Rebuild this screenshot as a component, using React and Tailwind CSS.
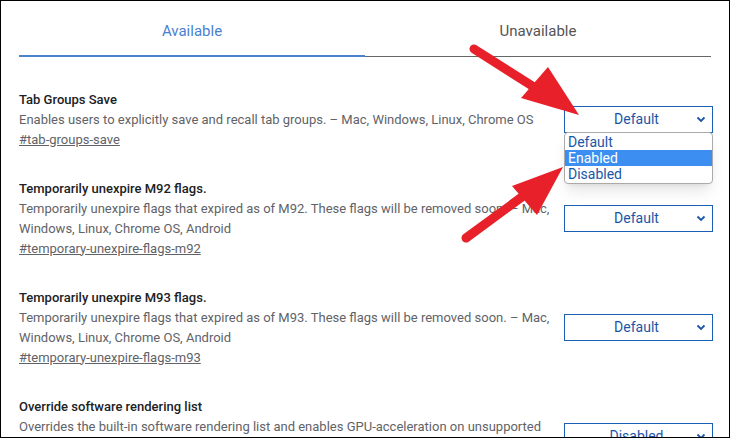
import React from "react";

const Chevron = () => (
  <svg width="10" height="7" viewBox="0 0 10 7" className="text-[#1a56a8]">
    <path d="M1.5 1.5 L5 5 L8.5 1.5" fill="none" stroke="currentColor" strokeWidth="1.8" />
  </svg>
);

const Select = ({ value, className = "" }) => (
  <div className={"w-[149px] h-[27px] border border-[#1a5fb4] bg-white flex items-center text-[14px] text-[#1a56a8] " + className}>
    <span className="flex-1 text-center pl-3">{value}</span>
    <span className="pr-[6px]"><Chevron /></span>
  </div>
);

const flags = [
  {
    title: "Tab Groups Save",
    desc: "Enables users to explicitly save and recall tab groups. – Mac, Windows, Linux, Chrome OS",
    link: "#tab-groups-save",
    value: "Default",
    open: true,
  },
  {
    title: "Temporarily unexpire M92 flags.",
    desc: "Temporarily unexpire flags that expired as of M92. These flags will be removed soon. – Mac, Windows, Linux, Chrome OS, Android",
    link: "#temporary-unexpire-flags-m92",
    value: "Default",
  },
  {
    title: "Temporarily unexpire M93 flags.",
    desc: "Temporarily unexpire flags that expired as of M93. These flags will be removed soon. – Mac, Windows, Linux, Chrome OS, Android",
    link: "#temporary-unexpire-flags-m93",
    value: "Default",
  },
  {
    title: "Override software rendering list",
    desc: "Overrides the built-in software rendering list and enables GPU-acceleration on unsupported system configurations.",
    link: "#ignore-gpu-blocklist",
    value: "Disabled",
  },
];

export default function App() {
  return (
    <div className="relative w-[730px] h-[438px] overflow-hidden bg-white border border-black" style={{ fontFamily: "Roboto, 'Liberation Sans', sans-serif" }}>
      <div className="flex mx-[18px] mt-[19px] text-[15px]">
        <div className="flex-1 text-center text-[#4a7fd0] pb-[12px] border-b-2 border-[#4a82cc]">Available</div>
        <div className="flex-1 text-center text-[#555] pb-[12px] border-b border-[#666]">Unavailable</div>
      </div>
      <div className="pl-[18px] pr-[16px] pt-[33px] flex flex-col gap-[29px]">
        {flags.map((f, i) => (
          <div key={i} className="flex justify-between gap-[12px]">
            <div className="flex-1 text-[13px] leading-[20px]">
              <div className="text-[#202124] font-medium">{f.title}</div>
              <div className="text-[#5f6368]">{f.desc}</div>
              <div className="text-[#5f6368] underline">{f.link}</div>
            </div>
            <div className={"relative " + (i === 0 ? "mt-[16px]" : "mt-[26px]")}>
              <Select value={f.value} />
              {f.open && (
                <div className="absolute left-0 top-[26px] w-[149px] bg-white border border-[#aaa] rounded-[4px] shadow-lg text-[14px] leading-[16px] text-[#1a56a8] py-[1px] z-10">
                  <div className="px-[3px]">Default</div>
                  <div className="px-[3px] bg-[#3c8ff0] text-white">Enabled</div>
                  <div className="px-[3px]">Disabled</div>
                </div>
              )}
            </div>
          </div>
        ))}
      </div>
      <svg className="absolute inset-0 pointer-events-none" width="730" height="438">
        <line x1="473" y1="48" x2="555" y2="100" stroke="#e8202a" strokeWidth="9" strokeLinecap="round" />
        <polygon points="578,114 520,97 547,66" fill="#e8202a" />
        <line x1="465" y1="237" x2="540" y2="182" stroke="#e8202a" strokeWidth="9" strokeLinecap="round" />
        <polygon points="562,166 511,185 536,214" fill="#e8202a" />
      </svg>
    </div>
  );
}
